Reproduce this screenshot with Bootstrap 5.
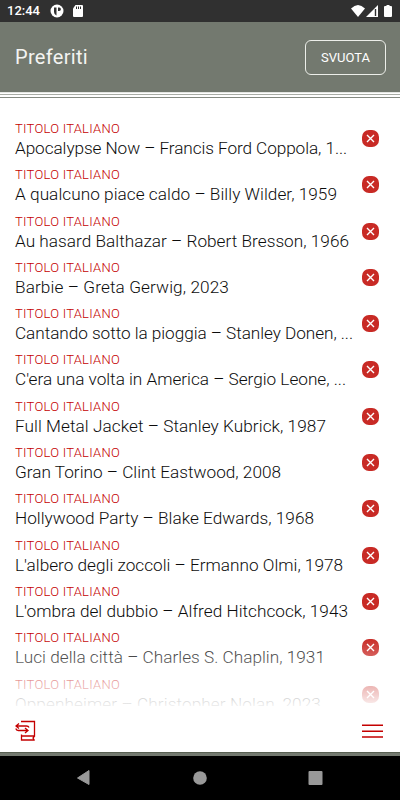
<!DOCTYPE html>
<html lang="it">
<head>
<meta charset="utf-8">
<meta name="viewport" content="width=device-width, initial-scale=1">
<title>Preferiti</title>
<link href="https://cdn.jsdelivr.net/npm/bootstrap@5.3.0/dist/css/bootstrap.min.css" rel="stylesheet">
<style>
  body { font-family: Roboto, "Liberation Sans", sans-serif; background: #fff; }
  .screen { width: 400px; height: 800px; }
  .status { height: 22px; background: #303030; font-size: 13px; padding-left: 7px; padding-right: 7px; }
  .status-apps { margin-left: 10px; }
  .topbar { height: 70px; background: #73796f; padding-left: 15px; padding-right: 15px; }
  .topbar h1 { font-size: 20px; line-height: 24px; font-weight: 400; color: #f4f4f2; }
  .btn-clear { width: 81px; height: 35px; border-radius: 6px; border: 1px solid #eceee9; color: #fff; font-size: 13px; font-weight: 400; line-height: 1; margin-right: -1px; }
  .rules { height: 6px; background: linear-gradient(#e4e6e2 0 1px, #fff 1px 2px, #a9ada6 2px 3px, #fff 3px 5px, #858a82 5px 6px); }
  .list-area { height: 608px; padding: 23px 15px 0; }
  .fav { height: 46.3px; }
  .fav-label { color: #c40000; font-size: 13px; line-height: 16px; font-weight: 300; }
  .fav-title { color: #0c0c0c; font-size: 17.2px; line-height: 22px; font-weight: 300; }
  .fit { display: inline-block; white-space: nowrap; }
  .fav-x { width: 17px; height: 17px; margin-right: 6px; margin-top: 9px; }
  .fade-out { height: 68px; background: linear-gradient(rgba(255,255,255,0), rgba(255,255,255,.93)); }
  .toolbar { height: 46px; padding: 4px 15px 0; }
  .strip { height: 4px; background: #73796f; border-top: 1px solid #586052; }
  .sysnav { height: 44px; background: #000; }
</style>
<script src="https://cdn.jsdelivr.net/npm/bootstrap@5.3.0/dist/js/bootstrap.bundle.min.js"></script>
</head>
<body>
<svg class="d-none">
  <symbol id="remove" viewBox="0 0 17 17"><rect width="17" height="17" rx="7" fill="#c82a25"/><path d="M5 5l7 7M12 5l-7 7" stroke="#fff" stroke-width="1.4" fill="none"/></symbol>
</svg>
<div class="screen d-flex flex-column overflow-hidden">
  <div class="status d-flex align-items-center text-white flex-shrink-0">
    <span class="fit fw-medium" data-w="33">12:44</span>
    <svg class="status-apps" width="34" height="14" viewBox="0 0 34 14"><circle cx="7" cy="7" r="6.500" fill="#fff"/><path d="M4 3.500h2.500v8Q4 10.500 4 8zM8 3.500h1.200a1.700 1.700 0 0 1 0 3.400H8z" fill="#303030"/><path d="M25.500 1H32q1 0 1 1v10q0 1-1 1h-8q-1 0-1-1V4.500z" fill="#fff"/><path d="M26.500 2.500v2.500M28.500 2.500v2.500M30.500 2.500v2.500" stroke="#303030"/></svg>
    <svg class="ms-auto" width="42" height="14" viewBox="0 0 42 14"><path d="M0 4.500Q7 -2.500 14 4.500L7 13z" fill="#fff"/><path d="M27 1v12H15z" fill="#fff"/><path d="M24.500 5v7" stroke="#303030" stroke-width="1.400"/><path d="M35.500 1h3v1H40q1 0 1 1v9q0 1-1 1h-6q-1 0-1-1V3q0-1 1-1h1.500z" fill="#fff"/></svg>
  </div>
  <header class="topbar d-flex align-items-center justify-content-between flex-shrink-0">
    <h1 class="mb-0"><span class="fit" data-w="73">Preferiti</span></h1>
    <button type="button" class="btn btn-clear p-0"><span class="fit" data-w="49">SVUOTA</span></button>
  </header>
  <div class="rules flex-shrink-0"></div>
  <main class="list-area position-relative overflow-hidden flex-shrink-0">
    <ul class="list-unstyled mb-0" id="favs"></ul>
    <div class="fade-out position-absolute bottom-0 start-0 end-0"></div>
  </main>
  <nav class="toolbar d-flex align-items-center justify-content-between flex-shrink-0">
    <svg width="22" height="22" viewBox="0 0 22 22" fill="none" stroke="#c40000" stroke-width="1.300"><path d="M6 1.500h13.500v14.500H6.500v4h13M19.500 16l-1.500 2 1.500 2.500M6.500 14.500V20"/><path d="M4 3.500L1 6l3 2.500M1 6h10.500q2 0 2.500 1.500M.8 8.500q.5 2 2.500 2H13M10 8l3 2.500-3 2.500"/></svg>
    <svg width="24" height="22" viewBox="0 0 24 22" stroke="#c40000" stroke-width="1.500" class="me-n1"><path d="M1 5.200h21M1 11.200h21M1 17h21"/></svg>
  </nav>
  <div class="strip flex-shrink-0"></div>
  <nav class="sysnav position-relative d-flex align-items-center justify-content-center flex-shrink-0">
    <svg width="400" height="44" viewBox="0 0 400 44" fill="#999"><path d="M89 14.500v14L77.500 22z" stroke="#999" stroke-linejoin="round"/><circle cx="200" cy="22" r="6.800"/><rect x="308.500" y="15" width="14" height="14" rx="1"/></svg>
  </nav>
</div>
<script>
  const films = [
    ["Apocalypse Now – Francis Ford Coppola, 1...", 332],
    ["A qualcuno piace caldo – Billy Wilder, 1959", 322],
    ["Au hasard Balthazar – Robert Bresson, 1966", 334],
    ["Barbie – Greta Gerwig, 2023", 214],
    ["Cantando sotto la pioggia – Stanley Donen, ...", 338],
    ["C'era una volta in America – Sergio Leone, ...", 331],
    ["Full Metal Jacket – Stanley Kubrick, 1987", 311],
    ["Gran Torino – Clint Eastwood, 2008", 266],
    ["Hollywood Party – Blake Edwards, 1968", 299],
    ["L'albero degli zoccoli – Ermanno Olmi, 1978", 328],
    ["L'ombra del dubbio – Alfred Hitchcock, 1943", 333],
    ["Luci della città – Charles S. Chaplin, 1931", 310],
    ["Oppenheimer – Christopher Nolan, 2023", 306]
  ];
  document.getElementById("favs").innerHTML = films.map(([title, w]) => `
    <li class="fav d-flex justify-content-between align-items-start">
      <div class="d-flex flex-column align-items-start">
        <span class="fav-label fit" data-w="105">TITOLO ITALIANO</span>
        <span class="fav-title fit" data-w="${w}">${title}</span>
      </div>
      <svg class="fav-x flex-shrink-0"><use href="#remove"/></svg>
    </li>`).join("");
  // Track each line out to its intended measure.
  document.querySelectorAll(".fit").forEach(el => {
    const gap = (el.dataset.w - el.getBoundingClientRect().width) / el.textContent.length;
    el.style.letterSpacing = gap.toFixed(3) + "px";
  });
</script>
</body>
</html>
